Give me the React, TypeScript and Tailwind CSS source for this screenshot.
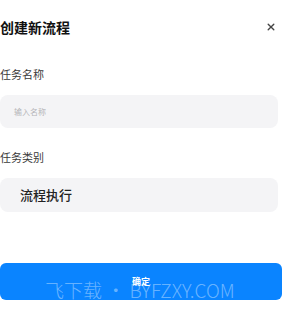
import React from 'react';

export default function App() {
  return (
    <div
      className="relative w-[287px] h-[312px] bg-white overflow-hidden"
      style={{ fontFamily: '"Noto Sans CJK SC", "Noto Sans", sans-serif' }}
    >
      <div className="flex flex-col">
        {/* Header */}
        <div className="mt-[18px] h-[18px] flex items-center justify-between pr-[10px]">
          <h2 className="text-[14px] leading-[18px] font-bold text-[#111]">创建新流程</h2>
          <button className="text-[#444] w-[12px] h-[12px] flex items-center justify-center">
            <svg width="8" height="8" viewBox="0 0 10 10" fill="none">
              <path d="M1.5 1.5 L8.5 8.5 M8.5 1.5 L1.5 8.5" stroke="currentColor" strokeWidth="1.7" strokeLinecap="round" />
            </svg>
          </button>
        </div>

        {/* Task name */}
        <label className="mt-[31px] h-[15px] text-[11px] leading-[15px] text-[#3a3a3a]">任务名称</label>
        <div className="mt-[13px] w-[278px] h-[33px] rounded-[8px] bg-[#f4f4f6] flex items-center pl-[14px]">
          <span className="text-[8px] leading-[10px] text-[#b4b4b8]">输入名称</span>
        </div>

        {/* Task category */}
        <label className="mt-[22px] h-[15px] text-[11px] leading-[15px] text-[#3a3a3a]">任务类别</label>
        <div className="mt-[13px] w-[278px] h-[34px] rounded-[8px] bg-[#f4f4f6] flex items-center pl-[20px]">
          <span className="text-[13px] leading-[16px] font-medium text-[#222]">流程执行</span>
        </div>

        {/* Confirm */}
        <button className="mt-[51px] w-[282px] h-[37px] rounded-[6px] bg-[#0a84ff] flex items-center justify-center">
          <span className="text-[9px] leading-[10px] font-bold text-white">确定</span>
        </button>
      </div>

      {/* Watermark */}
      <div className="absolute left-[45px] top-[279px] text-[19px] leading-[22px] font-light text-white/40 whitespace-nowrap pointer-events-none">
        飞下载 • BYFZXY.COM
      </div>
    </div>
  );
}
